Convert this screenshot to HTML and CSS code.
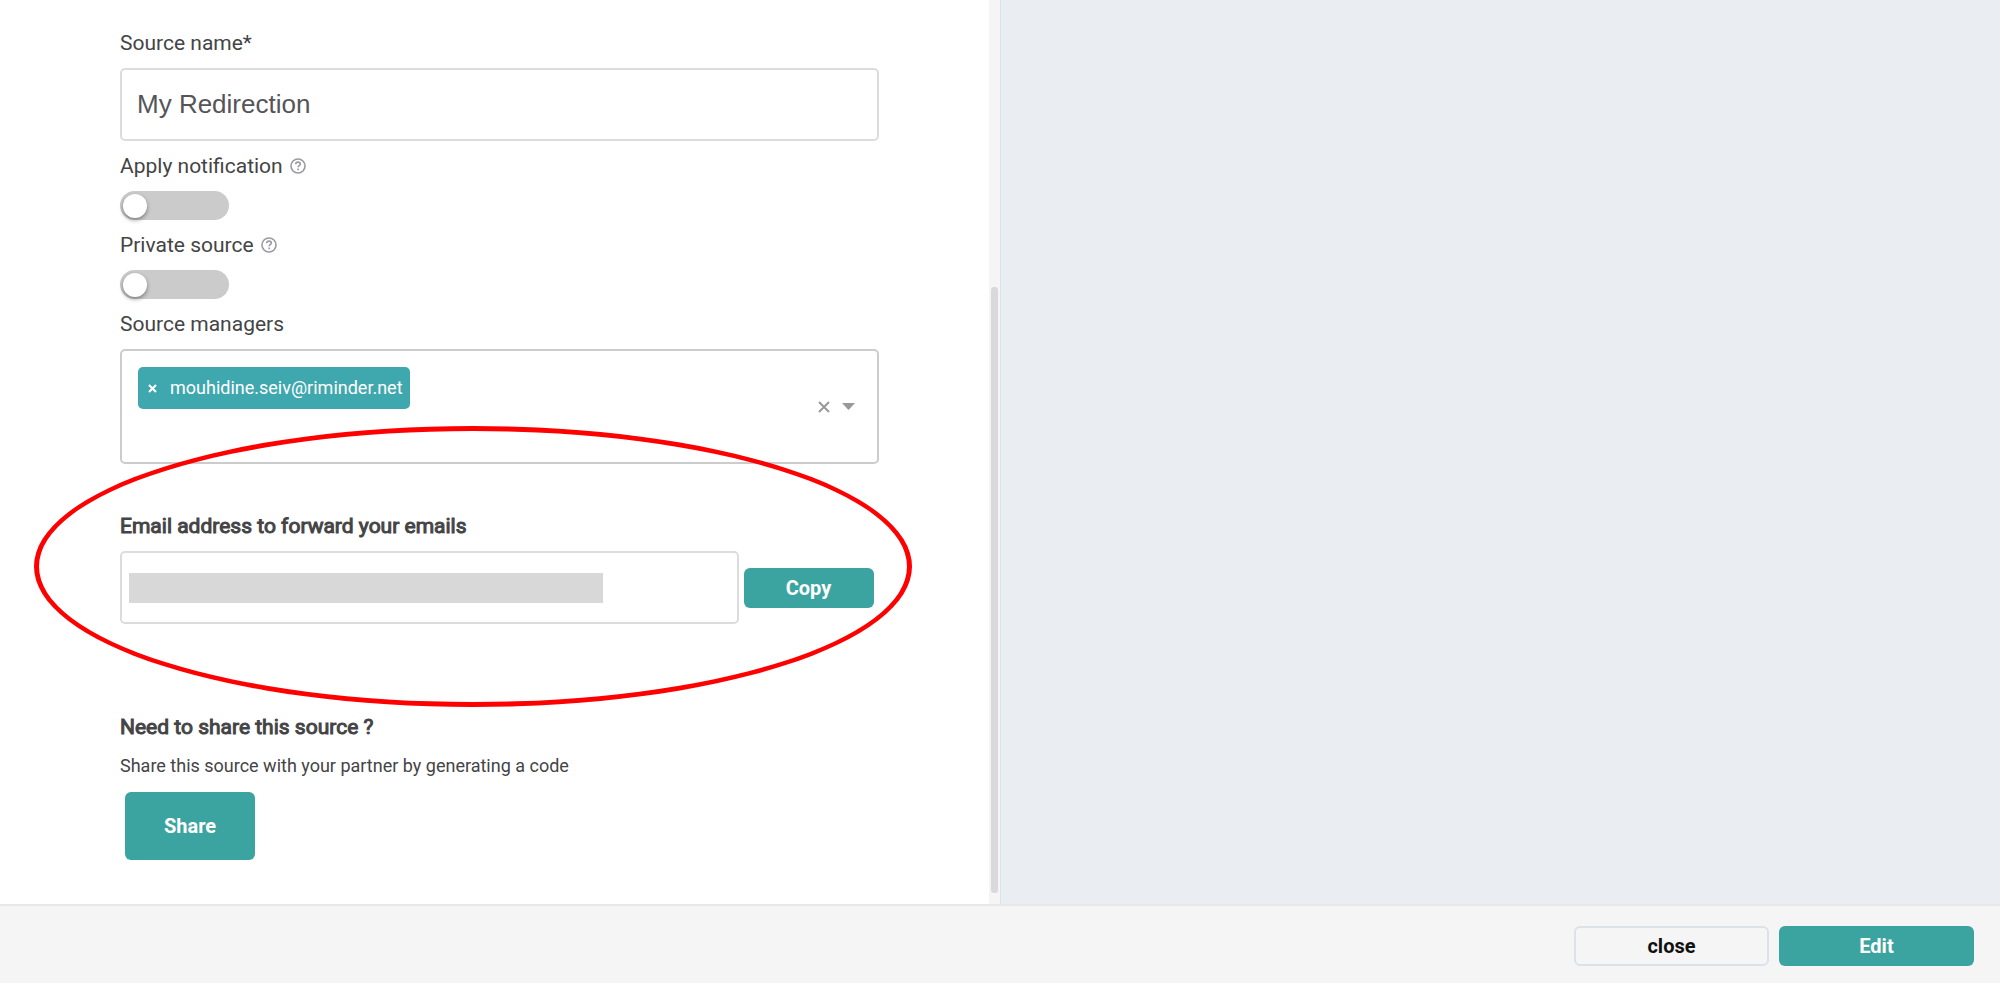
FILE: index.html
```
<!DOCTYPE html>
<html lang="en">
<head>
    <meta charset="UTF-8">
    <meta name="viewport" content="width=device-width, initial-scale=1.0">
    <title>Edit source</title>
    <link rel="stylesheet" href="styles.css">
</head>
<body>
    <div class="page">
        <main class="content">
            <section class="panel">
                <form class="source-form" id="sourceForm">
                    <div class="field">
                        <label class="label" for="sourceName">Source name*</label>
                        <input class="text-input" type="text" id="sourceName" value="My Redirection">
                    </div>

                    <div class="field">
                        <div class="label-row">
                            <label class="label" for="applyNotification">Apply notification</label>
                            <svg class="help-icon" viewBox="0 0 16 16">
                                <circle cx="8" cy="8" r="7"/>
                                <path d="M5.7 6.3C5.7 4.9 6.7 4.1 8 4.1s2.3.8 2.3 2c0 1.6-2.2 1.6-2.2 3.2"/>
                                <path d="M8.1 10.5v1.800"/>
                            </svg>
                        </div>
                        <input class="toggle" type="checkbox" id="applyNotification">
                    </div>

                    <div class="field">
                        <div class="label-row">
                            <label class="label" for="privateSource">Private source</label>
                            <svg class="help-icon" viewBox="0 0 16 16">
                                <circle cx="8" cy="8" r="7"/>
                                <path d="M5.7 6.3C5.7 4.9 6.7 4.1 8 4.1s2.3.8 2.3 2c0 1.6-2.2 1.6-2.2 3.2"/>
                                <path d="M8.1 10.5v1.800"/>
                            </svg>
                        </div>
                        <input class="toggle" type="checkbox" id="privateSource">
                    </div>

                    <div class="field">
                        <label class="label" for="managers">Source managers</label>
                        <div class="multi-select">
                            <div class="tags">
                                <span class="tag">
                                    <button class="icon-btn" type="button">
                                        <svg width="9" height="9" viewBox="0 0 9 9"><path d="M1 1l7 7M8 1l-7 7"/></svg>
                                    </button>
                                    mouhidine.seiv@riminder.net
                                </span>
                                <input class="tag-input" type="text" id="managers">
                            </div>
                            <button class="icon-btn" type="button">
                                <svg width="12" height="12" viewBox="0 0 12 12"><path d="M1 1l10 10M11 1L1 11"/></svg>
                            </button>
                            <button class="icon-btn" type="button">
                                <svg width="13" height="7" viewBox="0 0 13 7"><path class="arrow" d="M0 0h13L6.5 7z"/></svg>
                            </button>
                        </div>
                    </div>

                    <div class="field forward">
                        <label class="label strong" for="forwardEmail">Email address to forward your emails</label>
                        <div class="forward-row">
                            <div class="forward-box">
                                <input class="masked-input" type="text" id="forwardEmail" readonly>
                            </div>
                            <button class="btn btn-copy" type="button">Copy</button>
                        </div>
                    </div>

                    <div class="share">
                        <h2 class="label strong">Need to share this source ?</h2>
                        <p class="hint">Share this source with your partner by generating a code</p>
                        <button class="btn btn-share" type="button">Share</button>
                    </div>
                </form>
                <div class="scroll-track">
                    <div class="scroll-thumb"></div>
                </div>
                <div class="highlight"></div>
            </section>
            <aside class="preview"></aside>
        </main>

        <footer class="footer">
            <button class="btn btn-close" type="button">close</button>
            <button class="btn btn-edit" type="submit" form="sourceForm">Edit</button>
        </footer>
    </div>
</body>
</html>
```
FILE: styles.css
```
* {
    box-sizing: border-box;
}
body {
    margin: 0;
    background: #fff;
    color: #444446;
    font-family: Roboto, sans-serif;
    font-size: 21px;
    line-height: 26px;
}
.page {
    display: flex;
    flex-direction: column;
    height: 100vh;
}
.content {
    display: flex;
    flex: 1;
    min-height: 0;
}
.panel {
    position: relative;
    display: flex;
    flex: 1;
}
.preview {
    flex: 1;
    background: #eaedf2;
    border-left: 1px solid #dae3ea;
}

/* form */
.source-form {
    display: flex;
    flex: 1;
    flex-direction: column;
    gap: 12px;
    padding: 30px 110px 0 120px;
    overflow: hidden;
}
.field {
    display: flex;
    flex-direction: column;
    gap: 12px;
}
.label {
    margin: 0;
    font-size: 21px;
    font-weight: 400;
}
.strong {
    -webkit-text-stroke: 1px currentColor;
}
.label-row {
    display: flex;
    align-items: center;
    gap: 7px;
}
.help-icon {
    width: 16px;
    height: 16px;
    fill: none;
    stroke: #9a9aa3;
    stroke-width: 1.6;
}
.text-input {
    width: 100%;
    height: 73px;
    padding: 0 15px;
    border: 2px solid #dcdcdc;
    border-radius: 5px;
    color: #555559;
    font-family: "Liberation Sans", Arial, sans-serif;
    font-size: 26px;
}
.toggle {
    display: flex;
    align-items: center;
    width: 109px;
    height: 29px;
    margin: 0;
    padding: 0 3px;
    appearance: none;
    background: #cbcbcb;
    border-radius: 15px;
}
.toggle::before {
    content: "";
    width: 24px;
    height: 24px;
    background: #fff;
    border-radius: 50%;
    box-shadow: 0 2px 4px rgba(0, 0, 0, 0.4);
}
.toggle:checked {
    justify-content: flex-end;
    background: #3ba4a0;
}

/* managers select */
.multi-select {
    display: flex;
    align-items: center;
    gap: 12px;
    height: 115px;
    padding: 16px 22px 16px 16px;
    border: 2px solid #cccccc;
    border-radius: 5px;
}
.tags {
    display: flex;
    flex: 1;
    flex-direction: column;
    align-items: flex-start;
}
.tag {
    display: flex;
    align-items: center;
    gap: 13px;
    height: 42px;
    padding: 0 7px 0 10px;
    background: #3fa8af;
    border-radius: 5px;
    color: #fff;
    font-size: 18px;
}
.tag-input {
    width: 100%;
    height: 37px;
    padding: 0;
    border: none;
    outline: none;
    background: none;
}
.icon-btn {
    display: flex;
    padding: 0;
    border: none;
    background: none;
    color: #999;
    cursor: pointer;
}
.icon-btn path {
    fill: none;
    stroke: currentColor;
    stroke-width: 2;
}
.icon-btn .arrow {
    fill: currentColor;
    stroke: none;
}
.tag .icon-btn {
    color: #fff;
}

/* forward address */
.forward {
    margin-top: 37px;
}
.forward-row {
    display: flex;
    align-items: center;
    gap: 5px;
    padding-right: 5px;
}
.forward-box {
    display: flex;
    align-items: center;
    flex: 1;
    height: 73px;
    padding: 0 7px;
    border: 2px solid #dcdcdc;
    border-radius: 5px;
}
.masked-input {
    width: 79%;
    height: 30px;
    padding: 0;
    border: none;
    background: #d8d8d8;
}

/* share */
.share {
    display: flex;
    flex-direction: column;
    align-items: flex-start;
    gap: 13px;
    margin-top: 78px;
}
.hint {
    margin: 0;
    font-size: 18px;
}

/* buttons */
.btn {
    height: 40px;
    padding: 0;
    border: none;
    border-radius: 6px;
    background: #3ba4a0;
    color: #fff;
    font-family: Roboto, sans-serif;
    font-size: 20px;
    font-weight: 700;
    cursor: pointer;
}
.btn-copy {
    width: 130px;
}
.btn-share {
    width: 130px;
    height: 68px;
    margin-left: 5px;
}
.btn-close,
.btn-edit {
    width: 195px;
}
.btn-close {
    border: 2px solid #dce2ea;
    background: #f5f5f5;
    color: #111;
}

/* scrollbar */
.scroll-track {
    width: 11px;
    padding: 0 2px;
    background: #f5f5f5;
}
.scroll-thumb {
    height: 67%;
    margin-top: 287px;
    border-radius: 3px;
    background: #d9d8dd;
}

/* red outline around the forward address */
.highlight {
    position: absolute;
    top: 426px;
    left: 34px;
    right: 88px;
    height: 281px;
    border: 5px solid #ff0000;
    border-radius: 50%;
    pointer-events: none;
}

.footer {
    display: flex;
    justify-content: flex-end;
    gap: 10px;
    padding: 20px 26px 17px;
    border-top: 2px solid #e8e8e8;
    background: #f5f5f5;
}
```
